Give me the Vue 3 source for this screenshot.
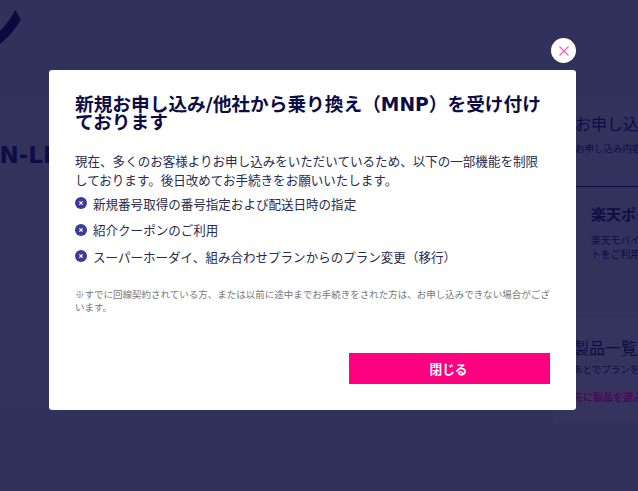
<script setup>
const items = [
  '新規番号取得の番号指定および配送日時の指定',
  '紹介クーポンのご利用',
  'スーパーホーダイ、組み合わせプランからのプラン変更（移行）'
]
</script>

<template>
  <div class="page">
    <div class="hero"><span class="hero-glyph">ン</span></div>
    <div class="content">
      <div class="left"><span class="left-title">ON-LINE</span></div>
      <aside class="side">
        <div class="side-block">
          <p class="side-head">お申し込み</p>
          <p class="side-sub">お申し込み内容</p>
        </div>
        <div class="side-point">
          <p class="point-head">楽天ポイント</p>
          <p class="point-text">楽天モバイル</p>
          <p class="point-text">トをご利用</p>
        </div>
        <div class="side-card">
          <p class="side-head">製品一覧</p>
          <p class="side-sub card-sub">あとでプランを</p>
          <p class="side-link">先に製品を選ぶ</p>
        </div>
      </aside>
    </div>
  </div>

  <div class="overlay">
    <div class="modal">
      <button class="close" type="button" aria-label="閉じる">
        <svg width="10" height="10" viewBox="0 0 10 10">
          <path d="M0.5 0.5L9.5 9.5M9.5 0.5L0.5 9.5" stroke="#ff59b4" stroke-width="1.2" fill="none" />
        </svg>
      </button>
      <h2 class="title">新規お申し込み/他社から乗り換え（MNP）を受け付けております</h2>
      <p class="lead">現在、多くのお客様よりお申し込みをいただいているため、以下の一部機能を制限しております。後日改めてお手続きをお願いいたします。</p>
      <ul class="list">
        <li v-for="item in items" :key="item" class="item">
          <svg class="mark" width="12" height="12" viewBox="0 0 12 12">
            <circle cx="6" cy="6" r="6" fill="#3b3b9b" />
            <path d="M4.4 4.4L7.6 7.6M7.6 4.4L4.4 7.6" stroke="#fff" stroke-width="1.2" fill="none" />
          </svg>
          <span>{{ item }}</span>
        </li>
      </ul>
      <p class="note">※すでに回線契約されている方、または以前に途中までお手続きをされた方は、お申し込みできない場合がございます。</p>
      <div class="actions">
        <button class="action" type="button">閉じる</button>
      </div>
    </div>
  </div>
</template>

<style>
html, body { margin: 0; height: 100%; overflow: hidden; background: #31315b; }
</style>

<style scoped>
.page {
  width: 638px;
  height: 491px;
  overflow: hidden;
  background: #31315b;
  font-family: "DejaVu Sans", "Noto Sans CJK JP", sans-serif;
  color: #0d0d45;
}
.hero {
  height: 95px;
  overflow: hidden;
}
.hero-glyph {
  display: block;
  margin: -13px 0 0 -63px;
  font-size: 90px;
  line-height: 90px;
  font-weight: 500;
  color: #0a0a40;
}
.content {
  display: flex;
  justify-content: space-between;
  height: 308px;
  background: #32325d;
}
.left { padding-top: 46px; margin-left: -20px; }
.left-title { font-size: 23px; line-height: 28px; font-weight: 700; }
.side { width: 85px; flex: none; white-space: nowrap; }
.side-block { height: 92px; padding: 20px 0 0 22px; box-sizing: border-box; border-bottom: 1px solid #0d0d45; }
.side-head { margin: 0; font-size: 16px; line-height: 20px; font-weight: 400; }
.side-sub { margin: 7px 0 0; font-size: 9.5px; line-height: 14px; }
.card-sub { margin-top: 4px; }
.side-point { height: 130px; padding: 18px 0 0 38px; box-sizing: border-box; }
.point-head { margin: 0 0 9px; font-size: 15px; line-height: 20px; font-weight: 700; }
.point-text { margin: 0; font-size: 9.8px; line-height: 14px; }
.side-card {
  height: 106px;
  padding: 22px 0 0 20px;
  box-sizing: border-box;
  background: #34345e;
}
.side-link { margin: 14px 0 0; font-size: 10px; line-height: 14px; font-weight: 700; color: #4a0a58; }

.overlay {
  position: fixed;
  inset: 0;
  font-family: "DejaVu Sans", "Noto Sans CJK JP", sans-serif;
}
.modal {
  position: absolute;
  left: 49px;
  top: 70px;
  width: 527px;
  height: 340px;
  box-sizing: border-box;
  padding: 26px 26px 0;
  background: #fff;
  border-radius: 3px;
}
.close {
  position: absolute;
  right: 0;
  top: -32px;
  width: 25px;
  height: 25px;
  padding: 0;
  border: 0;
  border-radius: 50%;
  background: #fff;
  display: flex;
  align-items: center;
  justify-content: center;
}
.title {
  margin: 0;
  font-size: 18.7px;
  line-height: 18px;
  font-weight: 700;
  color: #0d0d45;
}
.lead {
  margin: 20px 0 0;
  font-size: 12.54px;
  line-height: 19px;
  color: #2b2b4f;
}
.list { margin: 0; padding: 0; list-style: none; }
.item {
  display: flex;
  align-items: center;
  gap: 6px;
  height: 26.5px;
  font-size: 12.54px;
  color: #2b2b4f;
}
.mark { flex: none; }
.note {
  margin: 18px 0 0;
  font-family: "Noto Sans CJK JP", sans-serif;
  font-size: 9.5px;
  line-height: 13px;
  color: #777;
}
.actions {
  position: absolute;
  right: 26px;
  bottom: 26px;
}
.action {
  display: block;
  width: 201px;
  height: 31px;
  padding: 0 2px 0 0;
  border: 0;
  background: #ff0080;
  color: #fff;
  font-family: inherit;
  font-size: 12.7px;
  font-weight: 700;
}
</style>
